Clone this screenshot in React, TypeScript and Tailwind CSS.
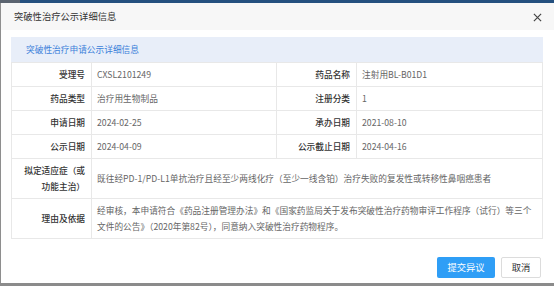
import React from "react";

const font = { fontFamily: '"Noto Sans CJK SC", "Noto Sans", sans-serif' };

function Label({ children }: { children: React.ReactNode }) {
  return (
    <td className="border border-[#e8e8e8] pl-[8px] pr-[6px] text-right align-middle font-medium text-[#333] leading-[16px]">
      {children}
    </td>
  );
}

function Value({ children, colSpan }: { children: React.ReactNode; colSpan?: number }) {
  return (
    <td
      colSpan={colSpan}
      className="border border-[#e8e8e8] pl-[5px] pr-[4px] text-left align-middle text-[#666] leading-[16px]"
    >
      {children}
    </td>
  );
}

export default function App() {
  return (
    <div className="w-[554px] h-[286px] bg-[#8b8b8b] flex flex-col overflow-hidden" style={font}>
      <div className="h-[3px] flex shrink-0">
        <div className="w-[20px] bg-[#5b6470]" />
        <div className="flex-1 bg-[#24507f]" />
      </div>
      <div className="flex flex-1 min-h-0">
        <div className="w-[2px] bg-[#8e8e8e]" />
        <div className="flex-1 bg-white flex flex-col">
          <div className="h-[27px] bg-[#f7f7f7] flex items-center justify-between pl-[13px] pr-[12px]">
            <span className="text-[9.3px] text-[#333]">突破性治疗公示详细信息</span>
            <svg width="9" height="9" viewBox="0 0 10 10" className="mt-[1px]">
              <path d="M1 1L9 9M9 1L1 9" stroke="#444" strokeWidth="1.3" />
            </svg>
          </div>
          <div className="pt-[7px] pl-[10px] pr-[11px]">
            <div className="h-[25px] bg-[#e8eef9] flex items-center pl-[15px] text-[8.7px] text-[#3b7fd9]">
              突破性治疗申请公示详细信息
            </div>
            <table className="table-fixed w-[531px] border-collapse text-[8.7px]">
              <colgroup>
                <col className="w-[80px]" />
                <col className="w-[185px]" />
                <col className="w-[80px]" />
                <col className="w-[186px]" />
              </colgroup>
              <tbody>
                <tr className="h-[24px]">
                  <Label>受理号</Label>
                  <Value>CXSL2101249</Value>
                  <Label>药品名称</Label>
                  <Value>注射用BL-B01D1</Value>
                </tr>
                <tr className="h-[24px]">
                  <Label>药品类型</Label>
                  <Value>治疗用生物制品</Value>
                  <Label>注册分类</Label>
                  <Value>1</Value>
                </tr>
                <tr className="h-[24px]">
                  <Label>申请日期</Label>
                  <Value>2024-02-25</Value>
                  <Label>承办日期</Label>
                  <Value>2021-08-10</Value>
                </tr>
                <tr className="h-[24px]">
                  <Label>公示日期</Label>
                  <Value>2024-04-09</Value>
                  <Label>公示截止日期</Label>
                  <Value>2024-04-16</Value>
                </tr>
                <tr className="h-[40px]">
                  <Label>拟定适应症（或功能主治）</Label>
                  <Value colSpan={3}>
                    既往经PD-1/PD-L1单抗治疗且经至少两线化疗（至少一线含铂）治疗失败的复发性或转移性鼻咽癌患者
                  </Value>
                </tr>
                <tr className="h-[40px]">
                  <Label>理由及依据</Label>
                  <Value colSpan={3}>
                    经审核，本申请符合《药品注册管理办法》和《国家药监局关于发布突破性治疗药物审评工作程序（试行）等三个文件的公告》（2020年第82号），同意纳入突破性治疗药物程序。
                  </Value>
                </tr>
              </tbody>
            </table>
          </div>
          <div className="flex justify-end gap-[6px] pt-[18px] pr-[13px]">
            <button className="h-[21px] w-[58px] rounded-[2px] bg-[#2f9ef6] text-white text-[9.3px]">
              提交异议
            </button>
            <button className="h-[21px] w-[40px] rounded-[2px] border border-[#dcdcdc] bg-white text-[#333] text-[9.3px]">
              取消
            </button>
          </div>
        </div>
      </div>
      <div className="h-[3px] bg-[#8b8b8b] shrink-0" />
    </div>
  );
}
